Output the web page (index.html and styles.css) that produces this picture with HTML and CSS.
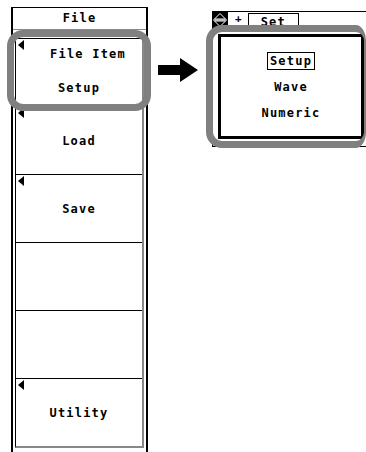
FILE: index.html
```html
<!DOCTYPE html>
<html lang="en">
<head>
    <meta charset="UTF-8">
    <title>File Item Setup</title>
    <link rel="stylesheet" href="styles.css">
</head>
<body>
    <div class="page">
        <div class="menu">
            <div class="menu-head">File</div>
            <div class="menu-body">
                <div class="cell two">
                    <span class="mark"></span>
                    <span class="shift">File Item</span>
                    <span>Setup</span>
                </div>
                <div class="cell"><span class="mark"></span>Load</div>
                <div class="cell"><span class="mark"></span>Save</div>
                <div class="cell"></div>
                <div class="cell"></div>
                <div class="cell"><span class="mark"></span>Utility</div>
            </div>
        </div>

        <svg class="arrow" width="40" height="24" viewBox="0 0 40 24">
            <polygon points="0,7 22,7 22,0 40,12 22,24 22,17 0,17" fill="#000"/>
        </svg>

        <div class="window">
            <div class="toolbar">
                <svg class="updown" width="16" height="16" viewBox="0 0 16 16">
                    <rect width="16" height="16" fill="#000"/>
                    <polygon points="8,1.5 13.5,7 2.5,7" fill="none" stroke="#fff" stroke-width="1"/>
                    <polygon points="2.5,9 13.5,9 8,14.5" fill="none" stroke="#fff" stroke-width="1"/>
                    <line x1="1" y1="8" x2="15" y2="8" stroke="#fff" stroke-width="1"/>
                </svg>
                <span class="plus">+</span>
                <div class="tab">Set</div>
            </div>
            <div class="frame">
                <div class="choices">
                    <span class="choice picked">Setup</span>
                    <span class="choice">Wave</span>
                    <span class="choice">Numeric</span>
                </div>
            </div>
        </div>
    </div>

    <div class="hl hl-menu"></div>
    <div class="hl hl-window"></div>
</body>
</html>
```

FILE: styles.css
```css
html {
    overflow: hidden;
}
body {
    margin: 0;
    width: 366px;
    height: 452px;
    overflow: hidden;
    background: #fff;
    color: #000;
    font-family: "DejaVu Sans Mono", monospace;
    font-weight: bold;
    font-size: 12px;
    letter-spacing: 1.2px;
}
.page {
    display: flex;
    align-items: flex-start;
    padding: 7px 0 0 11px;
    height: 445px;
}
.menu {
    width: 133px;
    height: 445px;
    border-left: 2px solid #000;
    border-right: 2px solid #000;
    display: flex;
    flex-direction: column;
}
.menu-head {
    height: 21px;
    line-height: 21px;
    text-align: center;
    border-top: 1px solid #000;
    border-bottom: 1px solid #888;
}
.menu-body {
    margin: 8px 2px 0 2px;
    border-left: 1px solid #000;
    border-right: 2px solid #888;
    border-bottom: 2px solid #888;
}
.cell {
    position: relative;
    box-sizing: border-box;
    height: 68px;
    border-top: 1px solid #000;
    display: flex;
    flex-direction: column;
    justify-content: center;
    align-items: center;
    line-height: 14px;
}
.cell.two {
    gap: 20px;
    padding-bottom: 4px;
}
.shift {
    margin-left: 18px;
}
.mark {
    position: absolute;
    left: 2px;
    top: 1px;
    width: 0;
    height: 0;
    border-top: 5px solid transparent;
    border-bottom: 5px solid transparent;
    border-right: 6px solid #000;
}
.arrow {
    margin: 51px 14px 0 10px;
}
.window {
    margin-top: 4px;
    width: 154px;
}
.toolbar {
    display: flex;
    align-items: flex-start;
    height: 16px;
    border-top: 1px solid #000;
}
.updown {
    display: block;
}
.plus {
    margin: 1px 0 0 7px;
    font-size: 11px;
    line-height: 12px;
}
.tab {
    margin: 1px 0 0 5px;
    width: 49px;
    height: 15px;
    border: 1px solid #000;
    border-bottom: none;
    text-align: center;
    line-height: 17px;
}
.frame {
    height: 119px;
    border-left: 1px solid #000;
    border-bottom: 1px solid #000;
    padding: 6px 0 0 5px;
    box-sizing: border-box;
}
.choices {
    box-sizing: border-box;
    width: 146px;
    height: 105px;
    border: 3px solid #000;
    display: flex;
    flex-direction: column;
    align-items: center;
    gap: 8px;
    padding-top: 15px;
}
.choice {
    line-height: 14px;
    padding: 1px 2px;
    border: 1px solid transparent;
}
.choice.picked {
    border-color: #000;
}
.hl {
    position: absolute;
    box-sizing: border-box;
    border: 7px solid #808080;
    border-radius: 16px;
}
.hl-menu {
    left: 7px;
    top: 30px;
    width: 144px;
    height: 81px;
}
.hl-window {
    left: 206px;
    top: 25px;
    width: 160px;
    height: 123px;
    border-right-width: 2px;
    border-top-right-radius: 10px 16px;
    border-bottom-right-radius: 10px 16px;
}
```
